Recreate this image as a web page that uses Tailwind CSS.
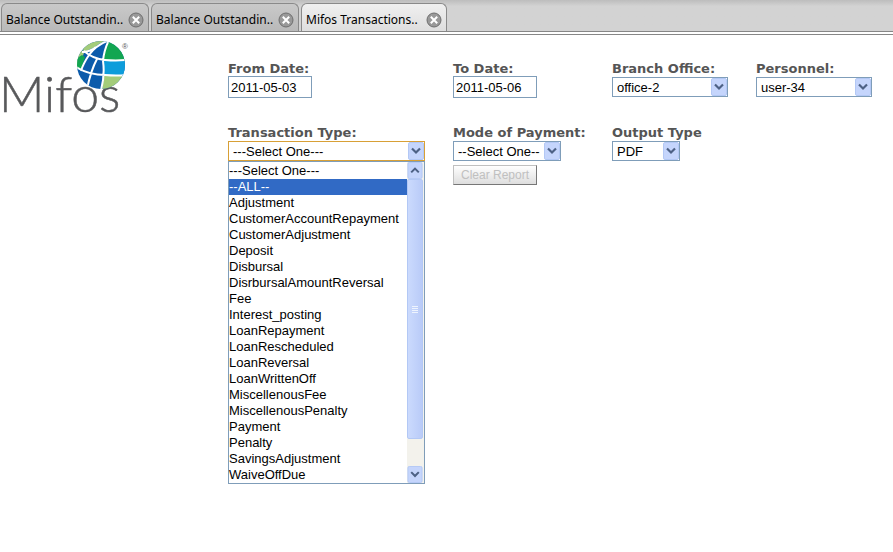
<!DOCTYPE html>
<html lang="en">
  <head>
    <meta charset="UTF-8" />
    <meta name="viewport" content="width=device-width, initial-scale=1.0" />
    <title>Mifos Transactions</title>
    <script src="https://cdn.jsdelivr.net/npm/@tailwindcss/browser@4"></script>
  </head>
  <body class="min-h-screen bg-white font-['Liberation_Sans',Arial,sans-serif] text-[13px] text-black">
    <svg class="hidden">
      <symbol id="close" viewBox="0 0 16 16">
        <circle cx="8" cy="8" r="7" fill="#999" stroke="#6e6e6e" />
        <path d="M4.8 4.8l6.4 6.4M11.2 4.8l-6.4 6.4" stroke="#fff" stroke-width="2" />
      </symbol>
      <symbol id="down" viewBox="0 0 16 18">
        <rect x=".5" y=".5" width="15" height="17" rx="1.5" fill="#c5d5fc" stroke="#b3c8f5" />
        <path d="M4 6.5l4 4 4-4" fill="none" stroke="#4d6185" stroke-width="2.2" />
      </symbol>
      <symbol id="up" viewBox="0 0 16 18">
        <rect x=".5" y=".5" width="15" height="17" rx="1.5" fill="#c5d5fc" stroke="#b3c8f5" />
        <path d="M4 11l4-4 4 4" fill="none" stroke="#4d6185" stroke-width="2.2" />
      </symbol>
    </svg>

    <nav class="flex h-8 gap-0.5 border-b border-[#868686] bg-linear-to-b from-[#bdbdbd] to-[#d3d3d3] to-20% pt-[3px] pl-px font-['Noto_Sans',Tahoma,sans-serif] text-xs">
      <div class="flex w-37 items-center justify-between rounded-t-md border border-b-0 border-[#8a8a8a] bg-linear-to-b from-[#c9c9c9] to-[#b9b9b9] pt-1 pr-1 pl-1">
        <a href="#">Balance Outstandin..</a>
        <button aria-label="Close tab"><svg class="size-4"><use href="#close" /></svg></button>
      </div>
      <div class="flex w-37 items-center justify-between rounded-t-md border border-b-0 border-[#8a8a8a] bg-linear-to-b from-[#c9c9c9] to-[#b9b9b9] pt-1 pr-1 pl-1">
        <a href="#">Balance Outstandin..</a>
        <button aria-label="Close tab"><svg class="size-4"><use href="#close" /></svg></button>
      </div>
      <div class="flex w-[146px] items-center justify-between rounded-t-md border border-b-0 border-[#8a8a8a] bg-linear-to-b from-[#f0f0f0] to-[#dedede] pt-1 pr-1 pl-1">
        <a href="#">Mifos Transactions..</a>
        <button aria-label="Close tab"><svg class="size-4"><use href="#close" /></svg></button>
      </div>
    </nav>

    <main class="mt-0.5 flex border-t border-[#868686]">
      <svg class="h-20 w-[132px] shrink-0 overflow-visible" viewBox="0 0 132 80" role="img" aria-label="Mifos">
        <text x="-1" y="77" font-family="Lato" font-weight="300" font-size="50" fill="#58595b" stroke="#58595b" stroke-width=".5">Mifos</text>
        <clipPath id="globe"><circle cx="101" cy="30" r="24" /></clipPath>
        <g clip-path="url(#globe)">
          <rect x="76" y="4" width="50" height="52" fill="#0c5bab" />
          <path d="M80 4h29q-8 3-14 8l-11 5z" fill="#a3cc7a" />
          <path d="M109 4l17 4v18h-23q0-11 6-22z" fill="#12a651" />
          <path d="M76 17l9-2-6 17h-3z" fill="#a3cc7a" />
          <path d="M76 24l6-4 3 2-4 13-5-2z" fill="#12a651" />
          <path d="M104 26h22v15h-22z" fill="#0d9ddb" />
          <path d="M104 41h22v14h-24z" fill="#a3cc7a" />
          <path d="M84 16q9 8 21 9 11 1 21 0M76 32q13 8 29 8 11 1 22 0M109 5q-14 6-20 15-6 9-8 16M97 24q-6 11-10 30M109 5q-5 10-6 21 2 14-2 29M82 17q8 0 14-5" fill="none" stroke="#fff" stroke-width="2" />
        </g>
        <text x="122" y="14" font-family="Liberation Sans" font-size="8" fill="#58595b">®</text>
      </svg>

      <form class="ml-24 grid grid-cols-[225px_159px_144px_1fr] content-start pt-[26px] text-[13px]">
        <div class="flex h-16 flex-col items-start">
          <label for="from" class="font-['DejaVu_Sans',Verdana,sans-serif] leading-4 font-bold text-[#555]">From Date:</label>
          <input id="from" value="2011-05-03" class="-mt-px h-[22px] w-21 border border-[#7f9db9] px-0.5" />
        </div>
        <div class="flex h-16 flex-col items-start">
          <label for="to" class="font-['DejaVu_Sans',Verdana,sans-serif] leading-4 font-bold text-[#555]">To Date:</label>
          <input id="to" value="2011-05-06" class="-mt-px h-[22px] w-21 border border-[#7f9db9] px-0.5" />
        </div>
        <div class="flex h-16 flex-col items-start">
          <label for="branch" class="font-['DejaVu_Sans',Verdana,sans-serif] leading-4 font-bold text-[#555]">Branch Office:</label>
          <div class="relative">
            <select id="branch" class="block h-5 w-29 appearance-none border border-[#7f9db9] pl-1"><option>office-2</option></select>
            <svg class="pointer-events-none absolute top-px right-px h-[18px] w-4"><use href="#down" /></svg>
          </div>
        </div>
        <div class="flex h-16 flex-col items-start">
          <label for="personnel" class="font-['DejaVu_Sans',Verdana,sans-serif] leading-4 font-bold text-[#555]">Personnel:</label>
          <div class="relative">
            <select id="personnel" class="block h-5 w-29 appearance-none border border-[#7f9db9] pl-1"><option>user-34</option></select>
            <svg class="pointer-events-none absolute top-px right-px h-[18px] w-4"><use href="#down" /></svg>
          </div>
        </div>

        <div class="flex flex-col items-start">
          <label for="type" class="font-['DejaVu_Sans',Verdana,sans-serif] leading-4 font-bold text-[#555]">Transaction Type:</label>
          <div class="relative">
            <select id="type" class="block h-5 w-[197px] appearance-none border border-[#d8a036] pl-1"><option>---Select One---</option></select>
            <svg class="pointer-events-none absolute top-px right-px h-[18px] w-4"><use href="#down" /></svg>
            <!-- open list -->
            <div class="absolute top-full left-0 flex w-full border border-[#7f9db9] bg-white">
              <ul role="listbox" aria-label="Transaction Type" class="grow pt-px leading-4">
                <li role="option">---Select One---</li>
                <li role="option" aria-selected="true" class="bg-[#316ac5] text-white">--ALL--</li>
                <li role="option">Adjustment</li>
                <li role="option">CustomerAccountRepayment</li>
                <li role="option">CustomerAdjustment</li>
                <li role="option">Deposit</li>
                <li role="option">Disbursal</li>
                <li role="option">DisrbursalAmountReversal</li>
                <li role="option">Fee</li>
                <li role="option">Interest_posting</li>
                <li role="option">LoanRepayment</li>
                <li role="option">LoanRescheduled</li>
                <li role="option">LoanReversal</li>
                <li role="option">LoanWrittenOff</li>
                <li role="option">MiscellenousFee</li>
                <li role="option">MiscellenousPenalty</li>
                <li role="option">Payment</li>
                <li role="option">Penalty</li>
                <li role="option">SavingsAdjustment</li>
                <li role="option">WaiveOffDue</li>
              </ul>
              <div class="flex w-[17px] flex-col bg-[#f3f2ec] pr-px">
                <svg class="h-[17px] w-4"><use href="#up" /></svg>
                <div class="flex h-65 flex-col items-center justify-center gap-px rounded-xs border border-[#b3c8f5] bg-linear-to-r from-[#cbdafd] to-[#b9cbf8]">
                  <i class="h-px w-1.5 bg-[#eef4fe]"></i>
                  <i class="h-px w-1.5 bg-[#eef4fe]"></i>
                  <i class="h-px w-1.5 bg-[#eef4fe]"></i>
                  <i class="h-px w-1.5 bg-[#eef4fe]"></i>
                </div>
                <svg class="mt-auto h-[17px] w-4"><use href="#down" /></svg>
              </div>
            </div>
          </div>
        </div>
        <div class="flex flex-col items-start">
          <label for="mode" class="font-['DejaVu_Sans',Verdana,sans-serif] leading-4 font-bold text-[#555]">Mode of Payment:</label>
          <div class="relative">
            <select id="mode" class="block h-5 w-27 appearance-none border border-[#7f9db9] pl-1"><option>--Select One--</option></select>
            <svg class="pointer-events-none absolute top-px right-px h-[18px] w-4"><use href="#down" /></svg>
          </div>
          <button disabled class="mt-1 h-5 w-21 border border-[#c0c0c0] border-r-[#777] border-b-[#777] bg-linear-to-b from-white to-[#dedede] text-xs text-[#c0c0c0]">Clear Report</button>
        </div>
        <div class="flex flex-col items-start">
          <label for="output" class="font-['DejaVu_Sans',Verdana,sans-serif] leading-4 font-bold text-[#555]">Output Type</label>
          <div class="relative">
            <select id="output" class="block h-5 w-17 appearance-none border border-[#7f9db9] pl-1"><option>PDF</option></select>
            <svg class="pointer-events-none absolute top-px right-px h-[18px] w-4"><use href="#down" /></svg>
          </div>
        </div>
      </form>
    </main>
  </body>
</html>
